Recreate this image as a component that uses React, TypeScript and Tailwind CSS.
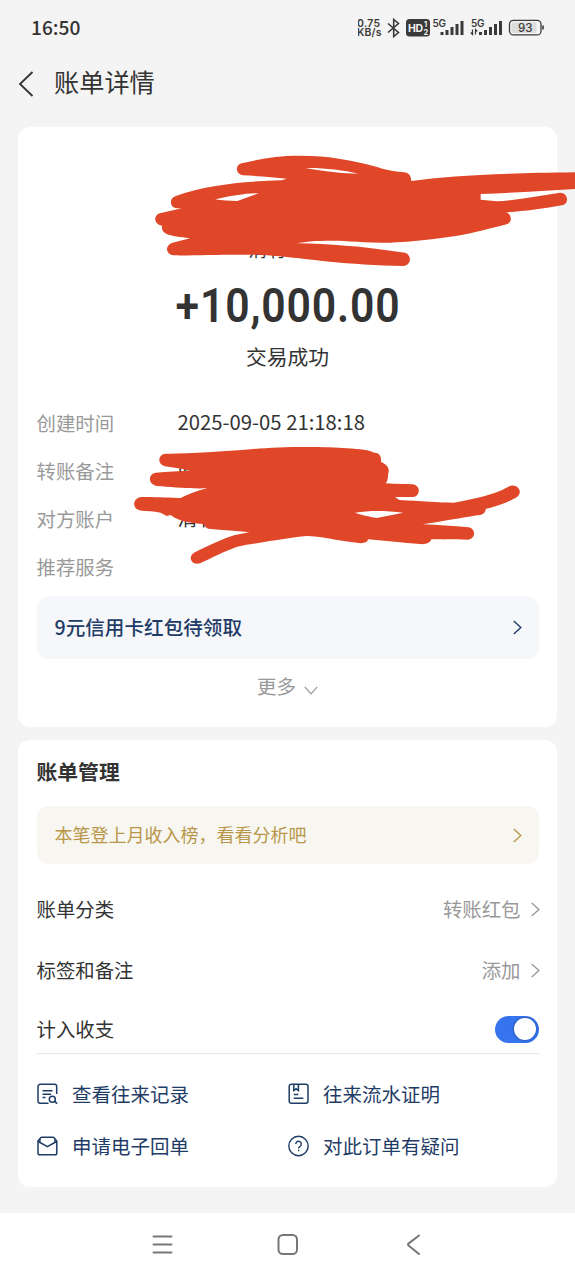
import type { ReactNode } from 'react';
import clsx from 'clsx';

const DETAILS = [
  { label: '创建时间', value: '2025-09-05 21:18:18' },
  { label: '转账备注', value: '收' },
  { label: '对方账户', value: '清有' },
  { label: '推荐服务', value: '' },
];

const LINKS = [
  { label: '查看往来记录', icon: <RecordIcon /> },
  { label: '往来流水证明', icon: <ProofIcon /> },
  { label: '申请电子回单', icon: <ReceiptIcon /> },
  { label: '对此订单有疑问', icon: <QuestionIcon /> },
];

export default function App() {
  return (
    <div className="relative flex h-[1280px] w-[575px] flex-col overflow-hidden bg-[#f4f4f4] font-['Noto_Sans_CJK_SC',sans-serif] text-[#333333]">
      <StatusBar />
      <header className="flex h-[71px] items-center pb-[17px] pl-[18px]">
        <svg width="16" height="26" viewBox="0 0 16 26" className="mt-0.5" fill="none" stroke="#333" strokeWidth="1.8">
          <path d="M14.5 1 2 13 14.5 25" />
        </svg>
        <h1 className="-mt-1 ml-[20px] text-[25.2px] leading-[36px]">账单详情</h1>
      </header>

      <main className="flex flex-col gap-[13px] px-[18px]">
        <BillCard />
        <ManageCard />
      </main>

      <NavBar />
    </div>
  );
}

// ─── Status bar ───────────────────────────────────────────────────────────────

function StatusBar() {
  return (
    <div className="flex h-14 shrink-0 items-center justify-between pl-[31px] pr-[31px]">
      <span className="-mt-0.5 text-[19.2px] font-medium">16:50</span>
      <svg width="186" height="24" viewBox="-26 0 186 24" fill="none" stroke="#3a3a3a">
        <g fill="#3a3a3a" stroke="none" fontFamily="Inter, sans-serif" fontSize="10.5" fontWeight="600">
          <text x="-27" y="10.7" textLength="23">0.75</text>
          <text x="-27" y="20" textLength="24.5">KB/s</text>
        </g>
        <path d="M4 7.5 14.5 16.5 9.7 20.5V3.5L14.5 7.5 4 16.5" strokeWidth="1.6" />
        <rect x="22" y="3" width="24" height="17.5" rx="3.5" fill="#3a3a3a" stroke="none" />
        <g fill="#f4f4f4" stroke="none" fontFamily="Inter, sans-serif" fontWeight="700">
          <text x="24" y="15.5" fontSize="10.5" textLength="15">HD</text>
          <text x="40" y="10.5" fontSize="7.5">1</text>
          <text x="39.5" y="19" fontSize="7.5">2</text>
        </g>
        <g fill="#3a3a3a" stroke="none" fontFamily="Inter, sans-serif" fontSize="10" fontWeight="600">
          <text x="48.5" y="11" textLength="13.5">5G</text>
          <text x="87" y="11" textLength="13.5">5G</text>
        </g>
        <g strokeWidth="3">
          <path d="M58 19v-3M63 19v-5M68 19v-8M73 19v-11M78 19V5" />
          <path d="M96.500 19v-3M101.500 19v-5M106.500 19v-8M111.500 19v-11M116.500 19V5" />
        </g>
        <path d="M88.500 13.500v5l-1.800-2M91.500 18.500v-5l1.800 2" strokeWidth="1.2" />
        <rect x="125.5" y="4.3" width="31.5" height="14.6" rx="4" strokeWidth="1.3" />
        <rect x="127.5" y="6.3" width="25" height="10.6" rx="2" fill="#dcdcdc" stroke="none" />
        <path d="M159 9.5v4" strokeWidth="1.6" />
        <text x="134" y="15.8" fontSize="11.5" fontFamily="Inter, sans-serif" fontWeight="500" fill="#3a3a3a" stroke="none" textLength="14.5">93</text>
      </svg>
    </div>
  );
}

// ─── Bill card ────────────────────────────────────────────────────────────────

function BillCard() {
  return (
    <section className="h-[600px] rounded-xl bg-white px-[18.5px] pt-[104px]">
      <p className="-mt-px h-[38px] pl-[212px] text-[19px] leading-[38px]">清有</p>
      <p className="mt-px flex h-[74px] origin-center scale-x-90 items-baseline justify-center font-['Roboto',sans-serif] text-[47.5px] font-semibold leading-[74px] tracking-[0.9px]">
        +10,000.00
      </p>
      <p className="h-[27px] text-center text-[20.8px] leading-[26px]">交易成功</p>

      <dl className="mt-7">
        {DETAILS.map((row) => (
          <div key={row.label} className="flex h-12 leading-[47px]">
            <dt className="w-[141px] pt-px text-[19.4px] text-[#999999]">{row.label}</dt>
            <dd className="text-[20.3px]">{row.value}</dd>
          </div>
        ))}
      </dl>

      <Banner className="mt-[6px] h-[63px] bg-[#f5f7fb] text-[19.6px] font-medium text-[#1f3c66]">9元信用卡红包待领取</Banner>

      <div className="flex h-14 items-center justify-center gap-[8px] text-[19.5px] text-[#999999]">
        <span className="-mt-0.5">更多</span>
        <svg width="14" height="9" viewBox="0 0 14 9" className="mt-1.5" fill="none" stroke="currentColor" strokeWidth="1.2">
          <path d="m.8.8 6.2 7 6.2-7" />
        </svg>
      </div>

      <Scribbles />
    </section>
  );
}

// Red marker strokes that cover the private data
function Scribbles() {
  return (
    <>
      <svg className="absolute left-[130px] top-[130px]" width="445" height="250" viewBox="0 0 1335 750" fill="#e04628" fillRule="evenodd">
        <path d="M335 100C400 85 440 77 510 77C600 77 670 92 730 108C760 117 790 125 815 126C835 126 843 135 844 153C960 138 1100 130 1335 127V177C1240 183 1150 188 1052 192V209L1100 214C1170 210 1230 196 1290 188C1314 188 1318 219 1300 225C1240 236 1180 244 1128 247C1146 252 1148 277 1130 283C1070 298 1010 315 950 322C890 330 830 337 780 338C700 338 640 331 600 332C560 332 530 334 500 340C600 342 700 350 770 361L825 368C846 375 844 405 822 408C740 406 660 401 600 395C540 389 480 381 400 375C300 372 200 377 130 376C106 372 104 345 128 338L180 325C150 321 125 318 110 312C99 307 94 298 96 287C70 282 70 255 90 250L155 235H140C118 232 116 203 140 197C230 165 340 154 455 151L470 146C430 142 380 138 340 136C315 132 315 105 335 100ZM527 114C580 113 640 120 685 131C640 131 580 124 527 114ZM255 208C300 198 350 189 386 190L322 213C300 213 275 211 255 208Z" />
      </svg>
      <svg className="absolute left-[120px] top-[400px]" width="420" height="180" viewBox="0 0 1260 540" fill="#e04628" fillRule="evenodd">
        <path d="M135 161C200 162 300 155 400 147C480 139 620 139 680 145C720 148 750 150 762 158C778 158 785 168 783 186C800 192 808 205 806 215C803 222 806 240 797 250C830 252 860 252 880 253C902 258 902 286 880 291H825L838 300C900 303 960 308 1000 308C1070 295 1120 285 1165 260C1190 246 1213 275 1190 292C1160 310 1120 322 1097 327C1097 340 1085 346 1070 346C1020 355 960 365 908 373C950 374 1000 378 1045 382C1068 386 1068 415 1045 419C1000 419 960 418 934 418C930 430 915 434 900 432C850 430 800 422 744 418C742 430 725 431 710 428C650 422 600 408 560 408C520 412 450 423 420 428C380 435 355 438 340 445C300 460 260 482 240 490C213 497 203 470 222 458C260 440 310 415 345 405L388 397C350 392 310 390 265 386C257 384 253 378 252 372C215 370 175 365 152 345L140 348L122 338C100 332 80 333 65 332C35 330 35 294 65 291C100 290 150 293 182 294C210 280 240 270 262 265C200 267 150 260 112 258C83 254 83 222 108 218C140 215 180 213 212 213C190 207 160 203 135 199C112 192 112 165 135 161ZM705 338C750 331 800 332 850 338L770 354C750 350 720 344 705 338Z" />
      </svg>
    </>
  );
}

// ─── Manage card ──────────────────────────────────────────────────────────────

function ManageCard() {
  return (
    <section className="h-[447px] rounded-xl bg-white px-[18.5px] pt-[13px]">
      <h2 className="h-[38px] text-[20.8px] font-bold leading-[37px]">账单管理</h2>
      <Banner className="mt-[15px] h-[58px] bg-[#f8f6f0] text-[18px] text-[#b8974a]">本笔登上月收入榜，看看分析吧</Banner>

      <div className="mt-4 text-[19.4px]">
        <SettingRow label="账单分类" value="转账红包" className="h-[60px]" />
        <SettingRow label="标签和备注" value="添加" className="h-[61px]" />
        <div className="flex h-[53px] items-center justify-between border-b border-[#e8e8e8] pt-1">
          <span>计入收支</span>
          <span className="flex h-[27px] w-[44px] items-center justify-end rounded-full bg-[#3574ee] pr-[3px]">
            <span className="size-[22px] rounded-full bg-white shadow-[0_0_3px_rgba(0,0,0,0.4)]" />
          </span>
        </div>
      </div>

      <div className="mt-[14px] grid grid-cols-2 text-[19.5px] text-[#1f3c66]">
        {LINKS.map((link) => (
          <a key={link.label} className="flex h-[52px] items-center gap-[14.5px]">
            {link.icon}
            <span className="-mt-px">{link.label}</span>
          </a>
        ))}
      </div>
    </section>
  );
}

function SettingRow({ label, value, className }: { label: string; value: string; className: string }) {
  return (
    <div className={clsx('flex items-center justify-between', className)}>
      <span className="-mt-[2px]">{label}</span>
      <span className="-mr-px flex items-center gap-[10px] text-[#999999]">
        <span className="-mt-[2px]">{value}</span>
        <Chevron />
      </span>
    </div>
  );
}

function Banner({ className, children }: { className: string; children: ReactNode }) {
  return (
    <div className={clsx('flex items-center justify-between rounded-xl pl-[18px] pr-[17px]', className)}>
      <span className="-mt-px">{children}</span>
      <Chevron />
    </div>
  );
}

// ─── Icons ────────────────────────────────────────────────────────────────────

function Chevron() {
  return (
    <svg width="9" height="15" viewBox="0 0 9 15" fill="none" stroke="currentColor" strokeWidth="1.4">
      <path d="m.8 1 7 6.5-7 6.5" />
    </svg>
  );
}

function LinkIcon({ children }: { children: ReactNode }) {
  return (
    <svg width="21" height="22" viewBox="0 0 21 22" fill="none" stroke="currentColor" strokeWidth="1.5">
      {children}
    </svg>
  );
}

function RecordIcon() {
  return (
    <LinkIcon>
      <path d="M11.5 20.3H3.2A2.2 2.2 0 0 1 1 18.1V3.5a2.2 2.2 0 0 1 2.2-2.2h14.3a2.2 2.2 0 0 1 2.2 2.2V11M5.5 7.7h10M5.5 11.2H14M5.5 14.6h3" />
      <circle cx="15.3" cy="16.3" r="3" />
      <path d="m17.6 18.4 2.6 2.2" />
    </LinkIcon>
  );
}

function ProofIcon() {
  return (
    <LinkIcon>
      <rect x="1.2" y="1.3" width="18.8" height="19" rx="2.2" />
      <path d="M5.8 1.5v6l2.3-1.7 2.3 1.7v-6M5.8 11.5h4.5M5.8 15.3h9.5" />
    </LinkIcon>
  );
}

function ReceiptIcon() {
  return (
    <LinkIcon>
      <rect x="1" y="5" width="18.8" height="14.8" rx="1.8" />
      <path d="M1.2 6.5 3 3.5Q3.5 2.3 5 2.3h11q1.3 0 1.9 1.2l1.7 3-9.2 5.2Z" fill="white" strokeLinejoin="round" />
      <path d="M3 7.5v-4M17.9 7.5v-4" strokeWidth="1.2" />
    </LinkIcon>
  );
}

function QuestionIcon() {
  return (
    <LinkIcon>
      <circle cx="10.5" cy="11" r="9.7" strokeWidth="1.4" />
      <path d="M7.8 9a2.75 2.75 0 1 1 4.2 2.3q-1.4.8-1.4 2.1M10.6 14.7v1.5" strokeWidth="1.4" />
    </LinkIcon>
  );
}

// ─── System navigation ────────────────────────────────────────────────────────

function NavBar() {
  return (
    <nav className="mt-auto flex h-[67px] items-start justify-between bg-white px-[151px] pt-5 text-[#777777]">
      <svg width="22" height="24" viewBox="0 0 22 24" fill="none" stroke="currentColor" strokeWidth="2" strokeLinecap="round">
        <path d="M2.5 3.5h18M2.5 11.5h18M2.5 19.5h18" />
      </svg>
      <svg width="22" height="24" viewBox="0 0 22 24" fill="none" stroke="currentColor" strokeWidth="2">
        <rect x="1.5" y="2" width="18.5" height="19" rx="4.5" />
      </svg>
      <svg width="22" height="24" viewBox="0 0 22 24" fill="none" stroke="currentColor" strokeWidth="2" strokeLinecap="round" strokeLinejoin="round">
        <path d="M17 2.5 6.500 10.600q-1 .9 0 1.800l10.500 8.600" />
      </svg>
    </nav>
  );
}
